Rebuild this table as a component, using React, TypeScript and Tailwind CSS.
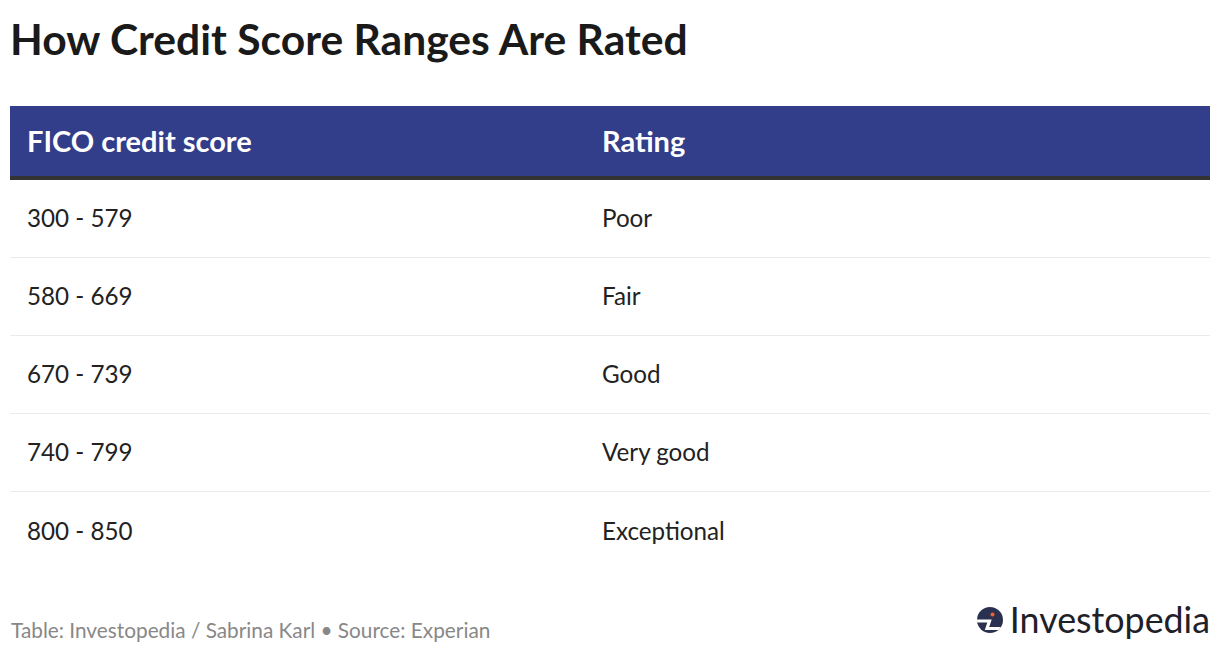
const rows = [
  ['300 - 579', 'Poor'],
  ['580 - 669', 'Fair'],
  ['670 - 739', 'Good'],
  ['740 - 799', 'Very good'],
  ['800 - 850', 'Exceptional'],
]

function Logo() {
  return (
    <div className="flex items-center gap-[7px]">
      <svg width="26" height="26" viewBox="0 0 26 26">
        <defs>
          <clipPath id="logo-clip">
            <circle cx="13" cy="13" r="13" />
          </clipPath>
        </defs>
        <circle cx="13" cy="13" r="13" fill="#2a3150" />
        <path
          d="M0 14 H12.5 L10 21.5 H26"
          fill="none"
          stroke="#fff"
          strokeWidth="3.2"
          strokeLinejoin="miter"
          clipPath="url(#logo-clip)"
        />
        <circle cx="15.5" cy="7.5" r="2" fill="#f0622d" />
      </svg>
      <span className="font-['Lato',sans-serif] text-[35.8px] leading-none text-[#1f2129]">
        Investopedia
      </span>
    </div>
  )
}

export default function App() {
  return (
    <div className="w-[1220px] h-[654px] bg-white px-[10px] font-['Lato',sans-serif] flex flex-col">
      <h1 className="pt-[16px] h-[106px] text-[42.6px] font-bold leading-[46px] text-[#1a1a1a]">
        How Credit Score Ranges Are Rated
      </h1>

      <div className="w-[1200px]">
        <div className="grid grid-cols-[576px_1fr] h-[74px] bg-[#323e8a] border-b-4 border-[#333333] text-white font-bold text-[29px] items-center">
          <div className="pl-[17px]">FICO credit score</div>
          <div className="pl-[16px]">Rating</div>
        </div>
        {rows.map(([score, rating], i) => (
          <div
            key={score}
            className={`grid grid-cols-[576px_1fr] h-[78px] items-center text-[24.2px] text-[#222222] ${
              i < rows.length - 1 ? 'border-b border-[#ebebeb]' : ''
            }`}
          >
            <div className="pl-[17px]">{score}</div>
            <div className="pl-[16px]">{rating}</div>
          </div>
        ))}
      </div>

      <div className="flex items-start justify-between mt-[32px]">
        <span className="pl-[1px] pt-[15px] leading-[25px] text-[20.8px] text-[#888888]">
          Table: Investopedia / Sabrina Karl • Source: Experian
        </span>
        <Logo />
      </div>
    </div>
  )
}
